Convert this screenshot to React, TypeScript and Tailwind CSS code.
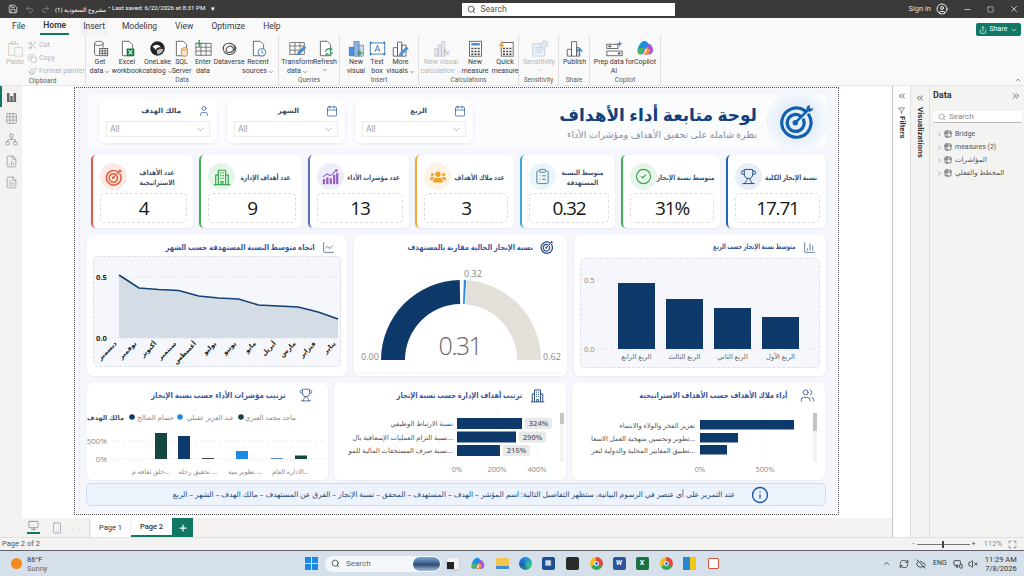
import type { ReactNode } from "react";
import {
  Save, Undo2, Redo2, Search, CircleUser, Minus, Square, X, Scissors, Copy, Paintbrush, Share, ChevronDown,
  ChevronUp, ChevronRight, ChevronsLeft, ChevronsRight, Filter, Table2, Trophy, Users, ChartLine, ChartColumn, Calendar,
  User, ClipboardList, CircleCheck, Grid3x3, Network, FileChartColumn, FileText, Smartphone, Monitor, Plus,
  Info, VolumeX, CloudOff, RefreshCw, MonitorSmartphone, Maximize,
} from "lucide-react";
import { FaUsers } from "react-icons/fa";

function TargetIcon({ size, color }: { size: number; color: string }) {
  return (
    <svg width={size} height={size} viewBox="0 0 32 32" fill="none" stroke={color} strokeLinecap="round">
      <path d="M23 6.8A13 13 0 1 0 26.5 10.5" strokeWidth="2.8" />
      <path d="M19 11.5A7.5 7.5 0 1 0 21.8 15" strokeWidth="2.8" />
      <circle cx="14.5" cy="17.5" r="2.4" fill={color} stroke="none" />
      <path d="M15 17 26 6" strokeWidth="2.2" />
      <path d="M24.5 3.5v4h4l2.5-2.6h-3.6V1.5z" fill={color} stroke="none" />
    </svg>
  );
}

function TowerIcon({ size, color }: { size: number; color: string }) {
  return (
    <svg width={size} height={size} viewBox="0 0 20 20" fill="none" stroke={color} strokeWidth="1.3">
      <path d="M1 18.5h18M3 18.5V8h3M17 18.5V8h-3M6 18.5V2.5h8v16" />
      <path d="M8 5.5h1.4M10.6 5.5H12M8 8.5h1.4M10.6 8.5H12M8 11.5h1.4M10.6 11.5H12M9 18.5V15h2v3.5" />
    </svg>
  );
}

function GrowthIcon({ size }: { size: number }) {
  return (
    <svg width={size} height={size} viewBox="0 0 20 20" fill="#9b59c6" stroke="none">
      <rect x="1" y="13" width="2.6" height="6" />
      <rect x="5" y="11" width="2.6" height="8" />
      <rect x="9" y="12" width="2.6" height="7" />
      <rect x="13" y="8" width="2.6" height="11" />
      <rect x="16.6" y="6" width="2.6" height="13" />
      <path d="M1 10.5 6 7l4 2 6.5-6" fill="none" stroke="#9b59c6" strokeWidth="1.2" />
      <path d="m14.5 2 4-.8-.8 4z" />
    </svg>
  );
}

const doc = "M4 1.5h8l4 4v13H4z";

const ribbonIcons: Record<string, ReactNode> = {
  paste: (
    <g stroke="#d9c9b8" fill="none" strokeWidth="1">
      <rect x="2" y="4" width="11" height="14" />
      <rect x="5" y="2" width="5" height="3" />
      <rect x="9" y="9" width="9" height="10" stroke="#cfcfcf" fill="#f9f9f9" />
    </g>
  ),
  getData: (
    <g stroke="#555" fill="none">
      <path d="M3 4v12c0 1.5 2 2.3 5 2.3M3 4c0-1.6 2.4-2.5 5-2.5s5 .9 5 2.5-2.4 2.5-5 2.5S3 5.600 3 4M13 4v5" />
      <rect x="9" y="10" width="9.500" height="8.500" fill="#fff" />
      <path d="M9 13h9.500M9 15.800h9.500M12.200 10v8.500M15.400 10v8.500" />
    </g>
  ),
  excel: (
    <g>
      <path d={doc} stroke="#555" fill="#fff" />
      <rect x="9" y="10" width="9" height="9" fill="#107c41" />
      <path d="m11.300 12 4.400 5M15.700 12l-4.400 5" stroke="#fff" strokeWidth="1.200" />
    </g>
  ),
  onelake: (
    <g>
      <circle cx="10" cy="10" r="8.500" fill="#222" />
      <path d="M4 8c4-4 8-3 10 1-3-1-5 0-6 3-1-2-2-3-4-4z" fill="#fff" />
      <path d="M9 13c2-3 5-3 8-2-1 4-4 6-7 6z" fill="#bbb" />
    </g>
  ),
  sql: (
    <g>
      <path d={doc} stroke="#555" fill="#fff" />
      <path d="M10 10.500c0-2 7-2 7 0v7c0 2-7 2-7 0z" fill="#fbe3c8" stroke="#e8833a" />
      <path d="M10 10.500c0 1.800 7 1.800 7 0" fill="none" stroke="#e8833a" />
    </g>
  ),
  enter: (
    <g stroke="#666" fill="none">
      <path d="M1 4h18v14H1zM1 8.500h18M1 13h18M7 4v14M13 4v14" />
      <path d="M5 0v8M1 4h8" stroke="#2e9e5b" strokeWidth="1.600" />
    </g>
  ),
  dataverse: (
    <g stroke="#555" fill="none" strokeWidth="1.300">
      <path d="M3 12c-2-5 3-9 8-8s7 6 3 9-9 2-8-2 6-5 8-2-1 6-4 5" />
      <path d="M16 6c3 4 1 10-5 11-3 .500-6-1-8-4" />
    </g>
  ),
  recent: (
    <g>
      <path d={doc} stroke="#555" fill="#fff" />
      <circle cx="14" cy="14.500" r="4.500" fill="#fff" stroke="#2b6cb0" />
      <path d="M14 12v2.700l1.800 1" stroke="#2b6cb0" fill="none" />
    </g>
  ),
  transform: (
    <g>
      <path d="M1 3h17v14H1zM1 7h17M1 12h17M7 3v14M13 3v14" stroke="#666" fill="#fff" />
      <path d="m9 18 1-3.500 8-8 2.500 2.500-8 8z" fill="#4a90d9" />
    </g>
  ),
  refresh: (
    <g>
      <path d={doc} stroke="#555" fill="#fff" />
      <path d="M10 14a4 4 0 0 1 7-2.500M18 14a4 4 0 0 1-7 2.500" stroke="#2e9e5b" strokeWidth="1.400" fill="none" />
      <path d="M17.500 9v3h-3M10.500 19v-3h3" stroke="#2e9e5b" fill="none" />
    </g>
  ),
  newVisual: (
    <g>
      <rect x="1" y="8" width="6" height="11" fill="#4a90d9" />
      <rect x="7" y="2" width="6" height="17" fill="#8ab8e6" stroke="#555" strokeWidth=".6" />
      <rect x="13" y="6" width="5" height="13" fill="#c9ddf2" stroke="#555" strokeWidth=".6" />
      <path d="M14 12v7M10.500 15.500h7" stroke="#2e9e5b" strokeWidth="1.500" />
    </g>
  ),
  textbox: (
    <g>
      <rect x="1.500" y="3.500" width="17" height="13" fill="#fff" stroke="#2b6cb0" />
      <path d="M1 3h2M17 3h2M1 17h2M17 17h2" stroke="#2b6cb0" strokeWidth="2" />
      <path d="m7 14 3-8 3 8M8.200 11.500h3.600" stroke="#2b6cb0" fill="none" />
    </g>
  ),
  moreVisuals: (
    <g>
      <path d="M1.500 9h5v10h-5zM6.500 2.500h5V19h-5zM11.500 6h5v13h-5z" fill="#fff" stroke="#555" />
      <path d="m8 19 1-3.500 8-8 2.500 2.500-8 8z" fill="#4a90d9" />
    </g>
  ),
  calc: (
    <g>
      <path d="M2 10h4v9H2zM6 6h4v13H6zM10 2h4v17h-4z" fill="#e4e8ee" stroke="#c2c7cf" />
      <text x="12" y="18" fontSize="9" fontStyle="italic" fill="#a9b1bb">fx</text>
    </g>
  ),
  measure: (
    <g>
      <rect x="3" y="1.500" width="14" height="17.500" fill="#fff" stroke="#555" />
      <rect x="5" y="3.500" width="10" height="3" fill="#4a90d9" />
      <path d="M5 9h2.400v2H5zM8.800 9h2.400v2H8.800zM12.600 9H15v2h-2.400zM5 12.500h2.400v2H5zM8.800 12.500h2.400v2H8.800zM12.600 12.500H15v2h-2.400zM5 16h2.400v1.600H5zM8.800 16h2.400v1.600H8.800zM12.600 16H15v1.600h-2.400z" fill="#444" />
    </g>
  ),
  quick: (
    <g>
      <rect x="5" y="3" width="14" height="16" fill="#fff" stroke="#555" />
      <path d="M7 9h2.400v2H7zM10.800 9h2.400v2h-2.400zM14.600 9H17v2h-2.400zM7 12.500h2.400v2H7zM10.800 12.500h2.400v2h-2.400zM14.600 12.500H17v2h-2.400zM7 16h2.400v1.600H7zM10.800 16h2.400v1.600h-2.400zM14.600 16H17v1.600h-2.400z" fill="#444" />
      <path d="M7 0 2 7h3l-2 6 6-8H6z" fill="#f2a33a" />
    </g>
  ),
  sensitivity: (
    <g>
      <path d="M2 4h11l3 3v12H2z" fill="#e8eff7" stroke="#c5d0dc" />
      <path d="M5 9h8M5 11.500h8M5 14h8" stroke="#c5d0dc" />
      <path d="m10 6 5-5 4 1 1 4-5 5z" fill="#dfe7f0" stroke="#c5d0dc" />
    </g>
  ),
  publish: (
    <g stroke="#555" fill="#fff">
      <path d="M1.500 11h5v8h-5zM6.500 2h6v17h-6zM12.500 9h3v10h-3z" />
      <path d="M16 19v-8M12.800 13.500 16 10l3.200 3.500" stroke="#2b87d1" strokeWidth="1.500" fill="none" />
    </g>
  ),
  prep: (
    <g>
      <rect x="1" y="5" width="13" height="5" fill="#fff" stroke="#555" />
      <rect x="1" y="13" width="18" height="5.500" fill="#fff" stroke="#555" />
      <rect x="3" y="6.500" width="3" height="2" fill="#444" />
      <rect x="14" y="14.800" width="3" height="2" fill="#444" />
      <path d="m16 1 1 2.500 2.500 1-2.500 1-1 2.500-1-2.500-2.500-1 2.500-1z" fill="#4a90d9" />
    </g>
  ),
  copilot: (
    <g>
      <path d="M5 3c3-3 7-2 8 1l3 8c-2-3-5-3-7-1L7 16c-2 2-5 1-6-1-1-4 1-9 4-12z" fill="#1d8fe0" />
      <path d="M1 15c-1-3 2-6 4-6l3 1-3 6c-1 1-3 1-4-1z" fill="#53b848" />
      <path d="M13 4c3 0 6 4 6 8 0 3-3 6-6 5l-2-2z" fill="#a05bd6" />
      <path d="M11 8c-2 3-3 6-4 8 2 2 5 2 7 0l2-4z" fill="#f2884a" />
      <path d="M10.500 11 8.500 15.500 10 16l2-5z" fill="#fff" />
    </g>
  ),
};

function RibbonItem({ icon, lines, w, muted, drop }: { icon: string; lines: string[]; w: string; muted?: boolean; drop?: boolean }) {
  return (
    <div className={`flex flex-col items-center shrink-0 ${w}`}>
      <svg width="17" height="17" viewBox="0 0 20 20" className="mb-[1px] shrink-0">{ribbonIcons[icon]}</svg>
      {lines.map((l, i) => (
        <span key={l} className={`text-[7px] leading-[9px] whitespace-nowrap flex items-center gap-[1px] ${muted ? "text-[#b5b5b5]" : "text-[#3b3a39]"}`}>
          {l}
          {drop && i === lines.length - 1 && <ChevronDown size={6} />}
        </span>
      ))}
    </div>
  );
}

function RibbonGroup({ name, w, children }: { name: string; w: string; children: ReactNode }) {
  return (
    <div className={`flex flex-col h-full border-r border-[#e1dfdd] shrink-0 ${w}`}>
      <div className="flex-1 flex pt-[5px]">{children}</div>
      <div className="text-[6.500px] leading-[9px] text-center text-[#605e5c]">{name}</div>
    </div>
  );
}

function Ribbon() {
  const tabs = [
    { t: "File", c: "ml-[12px]" },
    { t: "Home", c: "ml-[15px] px-[3px] font-semibold border-b-2 border-[#117865]" },
    { t: "Insert", c: "ml-[11px] px-[3px] bg-[#f3f3f3]" },
    { t: "Modeling", c: "ml-[14px]" },
    { t: "View", c: "ml-[18px]" },
    { t: "Optimize", c: "ml-[18px]" },
    { t: "Help", c: "ml-[18px]" },
  ];
  return (
    <div className="bg-[#f9f9f9] h-[68px] shrink-0 border-b border-[#e6e6e6]">
      <div className="h-[17px] flex items-center text-[8.500px] text-[#3b3a39]">
        {tabs.map((t) => (
          <div key={t.t} className={`${t.c} h-full flex items-center`}>{t.t}</div>
        ))}
        <div className="ml-auto mr-[3px] mt-[6px] w-[45px] h-[13px] bg-[#117865] rounded-[2px] text-white text-[7px] flex items-center justify-center gap-[3px]">
          <Share size={8} />Share<ChevronDown size={8} />
        </div>
      </div>
      <div className="h-[50px] flex">
        <div className="w-[86px] h-full flex flex-col border-r border-[#e1dfdd] shrink-0">
          <div className="flex-1 flex pt-[5px] pl-[5px]">
            <RibbonItem icon="paste" lines={["Paste"]} w="w-[20px]" muted />
            <div className="ml-[3px] flex flex-col gap-[2px] text-[7px] text-[#b5b5b5] leading-[11px]">
              <div className="flex items-center gap-[2px]"><Scissors size={9} />Cut</div>
              <div className="flex items-center gap-[2px]"><Copy size={9} />Copy</div>
              <div className="flex items-center gap-[2px] whitespace-nowrap"><Paintbrush size={9} />Format painter</div>
            </div>
          </div>
          <div className="text-[6.500px] leading-[9px] text-center text-[#605e5c]">Clipboard</div>
        </div>
        <RibbonGroup name="Data" w="w-[193px]">
          <RibbonItem icon="getData" lines={["Get", "data"]} w="w-[28px]" drop />
          <RibbonItem icon="excel" lines={["Excel", "workbook"]} w="w-[26px]" />
          <RibbonItem icon="onelake" lines={["OneLake", "catalog"]} w="w-[35px]" drop />
          <RibbonItem icon="sql" lines={["SQL", "Server"]} w="w-[13px]" />
          <RibbonItem icon="enter" lines={["Enter", "data"]} w="w-[30px]" />
          <RibbonItem icon="dataverse" lines={["Dataverse"]} w="w-[22px]" />
          <RibbonItem icon="recent" lines={["Recent", "sources"]} w="w-[36px]" drop />
        </RibbonGroup>
        <RibbonGroup name="Queries" w="w-[61px]">
          <RibbonItem icon="transform" lines={["Transform", "data"]} w="w-[37px]" drop />
          <RibbonItem icon="refresh" lines={["Refresh", ""]} w="w-[18px]" drop />
        </RibbonGroup>
        <RibbonGroup name="Insert" w="w-[79px]">
          <RibbonItem icon="newVisual" lines={["New", "visual"]} w="w-[32px]" />
          <RibbonItem icon="textbox" lines={["Text", "box"]} w="w-[10px]" />
          <RibbonItem icon="moreVisuals" lines={["More", "visuals"]} w="w-[37px]" drop />
        </RibbonGroup>
        <RibbonGroup name="Calculations" w="w-[100px]">
          <RibbonItem icon="calc" lines={["New visual", "calculation"]} w="w-[44px]" muted drop />
          <RibbonItem icon="measure" lines={["New", "measure"]} w="w-[24px]" />
          <RibbonItem icon="quick" lines={["Quick", "measure"]} w="w-[36px]" />
        </RibbonGroup>
        <RibbonGroup name="Sensitivity" w="w-[40px]">
          <RibbonItem icon="sensitivity" lines={["Sensitivity", ""]} w="w-[40px]" muted drop />
        </RibbonGroup>
        <RibbonGroup name="Share" w="w-[31px]">
          <RibbonItem icon="publish" lines={["Publish"]} w="w-[31px]" />
        </RibbonGroup>
        <RibbonGroup name="Copilot" w="w-[71px]">
          <RibbonItem icon="prep" lines={["Prep data for", "AI"]} w="w-[48px]" />
          <RibbonItem icon="copilot" lines={["Copilot"]} w="w-[14px]" />
        </RibbonGroup>
        <div className="flex-1 flex items-end justify-end pr-[2px] pb-[1px]"><ChevronUp size={8} color="#555" /></div>
      </div>
    </div>
  );
}

function Slicer({ label, icon, pad }: { label: string; icon: ReactNode; pad: string }) {
  return (
    <div className="w-[118px] h-[44px] bg-white rounded-[5px] shadow-[0_1px_3px_rgba(70,90,130,0.12)] px-[7px] pt-[5px] shrink-0">
      <div className="h-[14px] flex items-center justify-end">
        <span className={`text-[7px] font-bold text-[#3a4a68] ${pad}`}>{label}</span>
        {icon}
      </div>
      <div className="mt-[3px] h-[16px] border border-[#ececec] flex items-center justify-between px-[3px] text-[8.500px] text-[#999]">
        All<ChevronDown size={11} color="#888" strokeWidth={1.200} />
      </div>
    </div>
  );
}

const kpis = [
  { w: "w-[102px]", border: "border-l-[#e8574a]", circle: "bg-[#fbeae6]", value: "4", lines: ["عدد الأهداف", "الاستراتيجية"], icon: <TargetIcon size={18} color="#e2603f" /> },
  { w: "w-[103px]", border: "border-l-[#3bb152]", circle: "bg-[#e5f5e8]", value: "9", lines: ["عدد أهداف الإدارة"], icon: <TowerIcon size={18} color="#37a84e" /> },
  { w: "w-[101px]", border: "border-l-[#5b6fc0]", circle: "bg-[#eceff9]", value: "13", lines: ["عدد مؤشرات الأداء"], icon: <GrowthIcon size={17} /> },
  { w: "w-[99px]", border: "border-l-[#eea92f]", circle: "bg-[#fdf2e3]", value: "3", lines: ["عدد ملاك الأهداف"], icon: <FaUsers size={16} color="#eda32a" /> },
  { w: "w-[95px]", border: "border-l-[#3fa7d0]", circle: "bg-[#e8f6fa]", value: "0.32", lines: ["متوسط النسبة", "المستهدفة"], icon: <ClipboardList size={17} color="#5f7f9c" strokeWidth={1.400} /> },
  { w: "w-[99px]", border: "border-l-[#3bb152]", circle: "bg-[#e8f6ea]", value: "31%", lines: ["متوسط نسبة الإنجاز"], icon: <CircleCheck size={17} color="#3aa64e" strokeWidth={1.600} /> },
  { w: "w-[100px]", border: "border-l-[#1f66b5]", circle: "bg-[#e8eef8]", value: "17.71", lines: ["نسبة الإنجاز الكلية"], icon: <Trophy size={17} color="#1f4f8a" strokeWidth={1.400} /> },
];

function KpiCard({ k }: { k: (typeof kpis)[number] }) {
  return (
    <div className={`bg-white rounded-[5px] border-l-2 ${k.border} ${k.w} shadow-[0_1px_3px_rgba(70,90,130,0.1)] pl-[7px] pr-[6px] pt-[8px] shrink-0 flex flex-col`}>
      <div className="h-[27px] flex items-center justify-between">
        <div className={`w-[27px] h-[27px] rounded-full ${k.circle} flex items-center justify-center shrink-0`}>{k.icon}</div>
        <div className="flex-1 min-w-0 flex flex-col items-center text-[7.200px] leading-[10px] font-bold text-[#3f5272] scale-x-[.82] origin-center">
          {k.lines.map((l) => <div key={l} className="whitespace-nowrap">{l}</div>)}
        </div>
      </div>
      <div className="mt-[3px] h-[30px] border border-dashed border-[#dcdcdc] rounded-[5px] flex items-center justify-center text-[19px] tracking-[-1.200px] leading-none text-[#151515]">{k.value}</div>
    </div>
  );
}

function ChartCard({ title, icon, size, head, squeeze, children }: { title: string; icon: ReactNode; size: string; head: string; squeeze: string; children: ReactNode }) {
  return (
    <div className={`bg-white rounded-[6px] shadow-[0_1px_3px_rgba(70,90,130,0.08)] shrink-0 flex flex-col overflow-hidden ${size}`}>
      <div className={`h-[21px] pt-[3px] flex items-center justify-end shrink-0 ${head}`}>
        <span className={`font-bold text-[#3a5a9c] whitespace-nowrap origin-right ${squeeze}`}>{title}</span>
        {icon}
      </div>
      {children}
    </div>
  );
}

const months = ["ديسمبر", "نوفمبر", "أكتوبر", "سبتمبر", "أغسطس", "يوليو", "يونيو", "مايو", "أبريل", "مارس", "فبراير", "يناير"];
const trend = [275, 288, 289.5, 290.5, 296, 298, 299, 305, 306, 307, 312, 319];

function TrendChart() {
  const xs = trend.map((_, i) => 119 + i * (219 / 11));
  const line = trend.map((y, i) => `${xs[i]},${y}`).join(" ");
  return (
    <div className="mx-[6px] h-[111px] border border-dashed border-[#dcdfe6] rounded-[5px] bg-[#f6f7fc]">
      <svg width="246" height="109" viewBox="94 257 246 109" className="block">
        <path d="M100 277H340M100 338H340" stroke="#d5d8de" strokeDasharray="1 2" />
        <polygon points={`119,338 ${line} 338,338`} fill="#d4dce6" />
        <polyline points={line} fill="none" stroke="#12406f" strokeWidth="1.600" />
        <text x="96" y="280" fontSize="7.500" fontWeight="700" fill="#222">0.5</text>
        <text x="96" y="341" fontSize="7.500" fontWeight="700" fill="#222">0.0</text>
        {months.map((m, i) => (
          <text key={m} x={xs[i] - 2} y="344" fontSize="6.500" fontWeight="700" fill="#222" textAnchor="end" transform={`rotate(-45 ${xs[i] - 2} 344)`}>{m}</text>
        ))}
      </svg>
    </div>
  );
}

function arc(r0: number, r1: number, a0: number, a1: number) {
  const pt = (r: number, a: number) => `${461 - r * Math.cos(a)} ${360 - r * Math.sin(a)}`;
  return `M${pt(r1, a0)}A${r1} ${r1} 0 0 1 ${pt(r1, a1)}L${pt(r0, a1)}A${r0} ${r0} 0 0 0 ${pt(r0, a0)}Z`;
}

function GaugeChart() {
  const a = (v: number) => (v / 0.62) * Math.PI;
  return (
    <svg width="213" height="120" viewBox="354 256 213 120" className="block">
      <path d={arc(56, 80, 0, a(0.307))} fill="#0e3a6b" />
      <path d={arc(56, 80, a(0.325), Math.PI)} fill="#e3dfd9" />
      <path d={arc(56, 80, a(0.317), a(0.323))} fill="#2b8fe6" />
      <text x="473" y="277" fontSize="9" fill="#8a8a8a" textAnchor="middle">0.32</text>
      <text x="460" y="355" fontSize="25" fontWeight="300" letterSpacing="-1.500" fill="#666" textAnchor="middle">0.31</text>
      <text x="370" y="360" fontSize="9" fill="#8a8a8a" textAnchor="middle">0.00</text>
      <text x="552" y="360" fontSize="9" fill="#8a8a8a" textAnchor="middle">0.62</text>
      <path d="M358 373H562" stroke="#f0f0f0" />
    </svg>
  );
}

const quarters = [
  { x: 617, top: 283, label: "الربع الرابع" },
  { x: 665, top: 299, label: "الربع الثالث" },
  { x: 713, top: 308, label: "الربع الثاني" },
  { x: 761, top: 317, label: "الربع الأول" },
];

function QuarterChart() {
  return (
    <div className="mx-[6px] mt-[2px] h-[110px] border border-dashed border-[#dcdfe6] rounded-[5px] bg-[#f6f7fc]">
      <svg width="238" height="108" viewBox="580 259 238 108" className="block">
        <path d="M597 280H816M597 349H816" stroke="#d5d8de" strokeDasharray="1 2" />
        <text x="583" y="283" fontSize="7.500" fill="#888">0.5</text>
        <text x="583" y="352" fontSize="7.500" fill="#888">0.0</text>
        {quarters.map((q) => (
          <g key={q.x}>
            <rect x={q.x} y={q.top} width="37" height={349 - q.top} fill="#0e3a6b" />
            <text x={q.x + 18.500} y="359" fontSize="6.800" fill="#666" textAnchor="middle">{q.label}</text>
          </g>
        ))}
      </svg>
    </div>
  );
}

const legend = [
  { x: 296, dot: 241, c: "#15463f", t: "ماجد محمد العنزي" },
  { x: 234, dot: 180, c: "#1e88e5", t: "عبد العزيز عقيلي" },
  { x: 174, dot: 132, c: "#0e3a6b", t: "حسام الصالح" },
];
const kpiBars = [
  { x: 155, top: 433, c: "#15463f" },
  { x: 178, top: 436, c: "#0e3a6b" },
  { x: 202, top: 458, c: "#444" },
  { x: 236, top: 451, c: "#1e88e5" },
  { x: 271, top: 458, c: "#5c8fd0" },
  { x: 295, top: 455.500, c: "#15463f" },
];
const kpiLabels = [
  { x: 170, t: "خلق ثقافة م..." },
  { x: 217, t: "تحقيق رحلة ..." },
  { x: 262, t: "تطوير بنية ..." },
  { x: 309, t: "الادارة العام..." },
];

function KpiRankChart() {
  return (
    <svg width="241" height="76" viewBox="87 404 241 76" className="block bg-white">
      {legend.map((l) => (
        <g key={l.t}>
          <circle cx={l.dot} cy="417" r="2.800" fill={l.c} />
          <text x={l.x} y="420" fontSize="6.800" fill="#888" textAnchor="end">{l.t}</text>
        </g>
      ))}
      <text x="124" y="420" fontSize="6.500" fontWeight="700" fill="#555" textAnchor="end">مالك الهدف</text>
      <path d="M113 441H326M113 459H326" stroke="#ddd" strokeDasharray="1 2" />
      <text x="107" y="444" fontSize="8" fill="#888" textAnchor="end">500%</text>
      <text x="107" y="462" fontSize="8" fill="#888" textAnchor="end">0%</text>
      {kpiBars.map((b) => <rect key={b.x} x={b.x} y={b.top} width="12" height={459 - b.top} fill={b.c} />)}
      {kpiLabels.map((l) => <text key={l.x} x={l.x} y="474" fontSize="6.600" fill="#888" textAnchor="end">{l.t}</text>)}
    </svg>
  );
}

const deptBars = [
  { y: 418, w: 65, v: "324%", t: "نسبة الارتباط الوظيفي" },
  { y: 431.500, w: 59, v: "290%", t: "نسبة التزام العمليات الإسعافية بال..." },
  { y: 445, w: 43, v: "215%", t: "نسبة صرف المستحقات المالية للمو..." },
];

function DeptChart() {
  return (
    <svg width="232" height="76" viewBox="334 404 232 76" className="block">
      <path d="M497 412V462M537 412V462" stroke="#eee" strokeDasharray="1 2" />
      {deptBars.map((b) => (
        <g key={b.y}>
          <text x="453" y={b.y + 8} fontSize="6.800" fill="#555" textAnchor="end">{b.t}</text>
          <rect x="457" y={b.y} width={b.w} height="11" fill="#0e3a6b" />
          <rect x={457 + b.w + 3} y={b.y} width="27" height="11" rx="2" fill="#e8e8e8" />
          <text x={457 + b.w + 16.500} y={b.y + 8.300} fontSize="7.500" fontWeight="600" fill="#666" textAnchor="middle">{b.v}</text>
        </g>
      ))}
      <rect x="560" y="413" width="4" height="49" fill="#f3f3f3" />
      <rect x="560" y="413" width="4" height="11" fill="#c4c4c4" />
      {[["0%", 457], ["200%", 497], ["400%", 537]].map(([t, x]) => (
        <text key={t} x={x} y="472" fontSize="7.500" fill="#888" textAnchor="middle">{t}</text>
      ))}
    </svg>
  );
}

const ownerBars = [
  { y: 420, w: 94, t: "تعزيز الفخر والولاء والانتماء" },
  { y: 433, w: 38, t: "تطوير وتحسين منهجية العمل الاسعا..." },
  { y: 445, w: 27, t: "تطبيق المعايير المحلية والدولية لتعز..." },
];

function OwnerChart() {
  return (
    <svg width="253" height="76" viewBox="572 404 253 76" className="block">
      <path d="M700 412V462M765 412V462" stroke="#eee" strokeDasharray="1 2" />
      {ownerBars.map((b) => (
        <g key={b.y}>
          <text x="695" y={b.y + 7.500} fontSize="6.800" fill="#555" textAnchor="end">{b.t}</text>
          <rect x="700" y={b.y} width={b.w} height="9.500" fill="#0e3a6b" />
        </g>
      ))}
      <rect x="813" y="413" width="4" height="49" fill="#f3f3f3" />
      <rect x="813" y="413" width="4" height="18" fill="#c4c4c4" />
      <text x="700" y="472" fontSize="7.500" fill="#888" textAnchor="middle">0%</text>
      <text x="765" y="472" fontSize="7.500" fill="#888" textAnchor="middle">500%</text>
    </svg>
  );
}

function Report() {
  return (
    <div className="w-[765px] h-[428px] mt-[1px] shrink-0 border border-dotted border-[#555] bg-[#f5f7fc] flex flex-col font-['Open_Sans','DejaVu_Sans',sans-serif]">
      <div className="mt-[6px] ml-[12px] w-[740px] h-[54px] rounded-[6px] bg-[#fbfcfe] flex items-center pl-[12px] gap-[10px] overflow-hidden">
        <Slicer label="مالك الهدف" pad="mr-[17px]" icon={<User size={12} color="#2f62a8" strokeWidth={1.500} />} />
        <Slicer label="الشهر" pad="mr-[27px]" icon={<Calendar size={12} color="#2f62a8" strokeWidth={1.500} />} />
        <Slicer label="الربع" pad="mr-[27px]" icon={<Calendar size={12} color="#2f62a8" strokeWidth={1.500} />} />
        <div className="ml-auto flex flex-col items-end pt-[1px]">
          <div className="text-[17px] leading-[26px] font-bold text-[#12407a] whitespace-nowrap">لوحة متابعة أداء الأهداف</div>
          <div className="text-[9.500px] leading-[14px] text-[#8a8f98] whitespace-nowrap">نظرة شاملة على تحقيق الأهداف ومؤشرات الأداء</div>
        </div>
        <div className="w-[60px] h-[60px] rounded-full bg-[radial-gradient(#e6eefa_45%,#f5f8fd_70%)] border border-[#eaeff8] flex items-center justify-center shrink-0">
          <TargetIcon size={36} color="#1160b0" />
        </div>
      </div>

      <div className="mt-[7px] ml-[16px] flex gap-[6px] h-[73px]">
        {kpis.map((k) => <KpiCard key={k.value} k={k} />)}
      </div>

      <div className="mt-[7px] ml-[12px] flex gap-[7px]">
        <ChartCard title="اتجاه متوسط النسبة المستهدفة حسب الشهر" icon={<ChartLine size={13} color="#2d4f85" strokeWidth={1.300} />} size="w-[260px] h-[141px]" head="text-[8.200px] gap-[7px] pr-[12px]" squeeze="scale-x-[.84]"><TrendChart /></ChartCard>
        <ChartCard title="نسبة الإنجاز الحالية مقارنة بالمستهدف" icon={<TargetIcon size={14} color="#2d4f85" />} size="w-[213px] h-[141px]" head="text-[8.200px] gap-[7px] pr-[13px]" squeeze="scale-x-[.82]"><GaugeChart /></ChartCard>
        <ChartCard title="متوسط نسبة الإنجاز حسب الربع" icon={<ChartColumn size={13} color="#2d4f85" strokeWidth={1.300} />} size="w-[252px] h-[141px]" head="text-[7.400px] gap-[8px] pr-[10px]" squeeze="scale-x-[.72]"><QuarterChart /></ChartCard>
      </div>

      <div className="mt-[7px] ml-[12px] flex gap-[6px]">
        <ChartCard title="ترتيب مؤشرات الأداء حسب نسبة الإنجاز" icon={<Trophy size={14} color="#2d4f85" strokeWidth={1.300} />} size="w-[241px] h-[97px]" head="text-[8.200px] gap-[13px] pr-[15px]" squeeze="scale-x-[.86]"><KpiRankChart /></ChartCard>
        <ChartCard title="ترتيب أهداف الإدارة حسب نسبة الإنجاز" icon={<TowerIcon size={15} color="#2d4f85" />} size="w-[232px] h-[97px]" head="text-[8.200px] gap-[8px] pr-[21px]" squeeze="scale-x-[.82]"><DeptChart /></ChartCard>
        <ChartCard title="أداء ملاك الأهداف حسب الأهداف الاستراتيجية" icon={<Users size={15} color="#2d4f85" strokeWidth={1.300} />} size="w-[253px] h-[97px]" head="text-[8.200px] gap-[13px] pr-[10px]" squeeze="scale-x-[.83]"><OwnerChart /></ChartCard>
      </div>

      <div className="mt-[3px] ml-[11px] w-[740px] h-[23px] rounded-[5px] bg-[#edf3fc] border border-[#cfdcf0] flex items-center justify-end gap-[16px] pr-[56px]">
        <span className="text-[7.500px] text-[#274a7c] whitespace-nowrap" dir="rtl">عند التمرير على أي عنصر في الرسوم البيانية، ستظهر التفاصيل التالية: اسم المؤشر – الهدف – المستهدف – المحقق – نسبة الإنجاز – الفرق عن المستهدف – مالك الهدف – الشهر – الربع</span>
        <Info size={18} color="#1556a8" strokeWidth={1.800} className="shrink-0" />
      </div>
    </div>
  );
}

function LeftRail() {
  const icons = [Grid3x3, Network, FileChartColumn, FileText];
  return (
    <div className="w-[22px] bg-[#f3f2f1] flex flex-col items-center pt-[4px] gap-[8.500px] shrink-0 relative">
      <div className="absolute left-0 top-0 w-[2px] h-[21px] bg-[#117865]" />
      <svg width="13" height="13" viewBox="0 0 13 13" fill="#666" className="shrink-0">
        <path d="M2 3h2.500v8H2zM5.300 6h2.500v5H5.300zM8.600 3h2.500v8H8.600z" />
        <path d="M2 11h9.100v1H2z" />
      </svg>
      {icons.map((Ic, i) => <Ic key={i} size={13} color="#8a8886" strokeWidth={1.200} className="shrink-0" />)}
    </div>
  );
}

function PageTabs() {
  return (
    <div className="h-[19px] bg-[#f3f2f1] flex items-stretch shrink-0 pl-[27px] text-[7.500px] text-[#333]">
      <div className="w-[13px] flex items-center justify-center border-b-2 border-[#117865] mb-[3px]"><Monitor size={11} color="#555" strokeWidth={1.200} /></div>
      <div className="ml-[11px] w-[12px] flex items-center justify-center"><Smartphone size={12} color="#7b8ba5" strokeWidth={1.200} /></div>
      <div className="w-[27px] flex items-center justify-center gap-[6px] text-[#c4c4c4] text-[6px] border-r border-[#ddd]">‹<span>›</span></div>
      <div className="ml-[1px] w-[39px] bg-white flex items-center justify-center">Page 1</div>
      <div className="ml-[1px] w-[41px] bg-white flex items-center justify-center border-b-2 border-[#117865] font-medium">Page 2</div>
      <div className="w-[21px] bg-[#117865] flex items-center justify-center"><Plus size={10} color="#fff" strokeWidth={3} /></div>
    </div>
  );
}

function SidePanels() {
  const fields = ["Bridge", "measures (2)", "المؤاشرات", "المخطط والفعلي"];
  return (
    <div className="flex shrink-0 h-full">
      <div className="w-[18px] bg-white border-l border-[#c8c6c4] flex flex-col items-center pt-[5px]">
        <ChevronsLeft size={10} color="#444" />
        <Filter size={7} color="#444" className="mt-[6px]" />
        <span className="[writing-mode:vertical-rl] text-[8px] font-bold text-[#333] mt-[2px]">Filters</span>
      </div>
      <div className="w-[19px] bg-[#f3f3f2] border-l border-[#e1dfdd] flex flex-col items-center pt-[7px]">
        <ChevronsLeft size={10} color="#444" />
        <span className="[writing-mode:vertical-rl] text-[8px] font-bold text-[#333] mt-[4px]">Visualizations</span>
      </div>
      <div className="w-[96px] bg-[#f3f3f2] border-l border-[#e1dfdd] px-[3px] pt-[4px]">
        <div className="flex items-center justify-between h-[12px] text-[9px] font-bold text-[#333] pr-[1px]">Data<ChevronsRight size={10} color="#444" /></div>
        <div className="mt-[9px] h-[12px] bg-white border-b border-[#bbb] rounded-[2px] flex items-center gap-[3px] px-[5px] text-[8px] text-[#888]"><Search size={8} />Search</div>
        <div className="mt-[6px] flex flex-col gap-[3px] pl-[3px]">
          {fields.map((f) => (
            <div key={f} className="h-[10px] flex items-center gap-[1px] text-[7px] text-[#555] whitespace-nowrap">
              <ChevronRight size={7} color="#777" />
              <Table2 size={8} color="#444" className="mr-[2px]" />{f}
            </div>
          ))}
        </div>
      </div>
    </div>
  );
}

function TaskIcon({ ml, children }: { ml: string; children: ReactNode }) {
  return <div className={`shrink-0 w-[14px] h-[14px] flex items-center justify-center ${ml}`}>{children}</div>;
}

function Tile({ bg, t }: { bg: string; t: string }) {
  return <div className={`w-[13px] h-[13px] rounded-[2px] flex items-center justify-center text-white text-[7px] font-bold ${bg}`}>{t}</div>;
}

function Taskbar() {
  const chrome = <div className="w-[13px] h-[13px] rounded-full bg-[conic-gradient(#e8453c_0_33%,#3aa757_0_66%,#f9bc15_0)] flex items-center justify-center"><div className="w-[5px] h-[5px] rounded-full bg-[#2b7de9] border border-white" /></div>;
  return (
    <div className="h-[26px] shrink-0 bg-[#d6e0ea] border-t-[1px] border-[#5f6368] flex items-center text-[7.500px] text-[#333]">
      <div className="ml-[11px] w-[11px] h-[11px] rounded-full bg-[#f08a1d] shrink-0" />
      <div className="ml-[5px] leading-[9px] w-[30px] shrink-0"><div>86°F</div><div className="text-[#666]">Sunny</div></div>
      <div className="ml-[248px] w-[13px] h-[13px] grid grid-cols-2 gap-[1px] shrink-0">
        <div className="bg-[#1e88e5]" /><div className="bg-[#1e88e5]" /><div className="bg-[#1e88e5]" /><div className="bg-[#1e88e5]" />
      </div>
      <div className="ml-[7px] w-[116px] h-[16px] rounded-full bg-[#f4f7fa] flex items-center px-[6px] gap-[6px] text-[8px] text-[#666] shrink-0">
        <Search size={9} color="#333" />Search
        <div className="ml-auto -mr-[5px] w-[27px] h-[14px] rounded-full bg-[linear-gradient(#7fa8d8,#2f4f78_55%,#a9bfd8)]" />
      </div>
      <TaskIcon ml="ml-[5px]"><div className="w-[12px] h-[11px] bg-[#f2f2f2] shadow-sm"><div className="w-[7px] h-[7px] mt-[4px] bg-[#222]" /></div></TaskIcon>
      <TaskIcon ml="ml-[11px]"><svg width="14" height="14" viewBox="0 0 20 20">{ribbonIcons.copilot}</svg></TaskIcon>
      <TaskIcon ml="ml-[10px]"><div className="w-[13px] h-[11px] rounded-[1px] bg-[#f5c451] border-b-[3px] border-[#3d8fd8]" /></TaskIcon>
      <TaskIcon ml="ml-[9px]"><div className="w-[13px] h-[13px] rounded-full bg-[conic-gradient(#1f8ce0,#38c47b,#1b5fb0,#1f8ce0)]" /></TaskIcon>
      <TaskIcon ml="ml-[9px]"><Tile bg="bg-[#1c4f94]" t="▦" /></TaskIcon>
      <TaskIcon ml="ml-[10px]"><Tile bg="bg-[#2b2b2b]" t="" /></TaskIcon>
      <TaskIcon ml="ml-[10px]">{chrome}</TaskIcon>
      <TaskIcon ml="ml-[9px]"><Tile bg="bg-[#2b579a]" t="W" /></TaskIcon>
      <TaskIcon ml="ml-[9px]"><Tile bg="bg-[#1d6f42]" t="X" /></TaskIcon>
      <TaskIcon ml="ml-[10px]">{chrome}</TaskIcon>
      <TaskIcon ml="ml-[9px]"><div className="w-[13px] h-[13px] bg-[linear-gradient(90deg,#2b87d1_50%,#f2c811_50%)]" /></TaskIcon>
      <TaskIcon ml="ml-[10px]"><div className="w-[11px] h-[11px] border border-[#e0533d] bg-white rounded-[1px]" /></TaskIcon>
      <ChevronUp size={9} color="#333" className="ml-[162px] shrink-0" />
      <RefreshCw size={10} color="#333" className="ml-[8px] shrink-0" />
      <CloudOff size={10} color="#333" className="ml-[7px] shrink-0" />
      <span className="ml-[7px] text-[7px] shrink-0">ENG</span>
      <MonitorSmartphone size={10} color="#333" className="ml-[6px] shrink-0" />
      <VolumeX size={10} color="#333" className="ml-[5px] shrink-0" />
      <div className="ml-[7px] text-right leading-[9px] text-[7.500px] shrink-0"><div>11:29 AM</div><div>7/8/2026</div></div>
    </div>
  );
}

export default function App() {
  return (
    <div className="w-[1024px] h-[576px] overflow-hidden flex flex-col bg-white font-['Roboto','DejaVu_Sans',sans-serif]">
      <div className="h-[18px] bg-[#3b3a39] flex items-center text-white shrink-0 text-[7px]">
        <Save size={10} color="#ddd" className="ml-[8px] shrink-0" />
        <Undo2 size={9} color="#888" className="ml-[7px] shrink-0" />
        <Redo2 size={9} color="#888" className="ml-[7px] shrink-0" />
        <div className="ml-[5px] w-[156px] h-[10px] overflow-hidden flex items-center whitespace-nowrap shrink-0">
          <span className="text-[6px]">(1) مشروع السعودية</span>
          <span className="ml-[2px] text-[6.200px]">• Last saved: 6/22/2026 at 8:31 PM</span>
        </div>
        <span className="text-[7px] shrink-0">▾</span>
        <div className="ml-[247px] w-[213px] h-[13px] bg-white flex items-center pl-[5px] gap-[5px] text-[#555] text-[8.500px] shrink-0"><Search size={9} color="#333" />Search</div>
        <span className="ml-[234px] text-[#cfe3f5] text-[7.500px] shrink-0">Sign in</span>
        <CircleUser size={12} color="#eee" className="ml-[5px] shrink-0" />
        <Minus size={9} color="#ddd" className="ml-[15px] shrink-0" />
        <Square size={7} color="#ddd" className="ml-[15px] shrink-0" />
        <X size={10} color="#ddd" className="ml-[15px] shrink-0" />
      </div>
      <Ribbon />
      <div className="flex-1 flex min-h-0">
        <div className="w-[892px] flex flex-col shrink-0">
          <div className="flex-1 flex min-h-0">
            <LeftRail />
            <div className="flex-1 bg-white pl-[52px]"><Report /></div>
          </div>
          <PageTabs />
        </div>
        <SidePanels />
      </div>
      <div className="h-[13px] bg-[#f3f3f2] border-t border-[#e1dfdd] flex items-center text-[7.500px] text-[#555] px-[2px] shrink-0">
        Page 2 of 2
        <span className="ml-auto">-</span>
        <div className="ml-[2px] w-[53px] h-[1px] bg-[#777] flex justify-center items-center"><div className="w-[2px] h-[7px] bg-[#444]" /></div>
        <span className="ml-[2px]">+</span>
        <span className="ml-[8px] text-[#888]">112%</span>
        <Maximize size={9} color="#666" className="ml-[6px] mr-[5px]" />
      </div>
      <Taskbar />
    </div>
  );
}
